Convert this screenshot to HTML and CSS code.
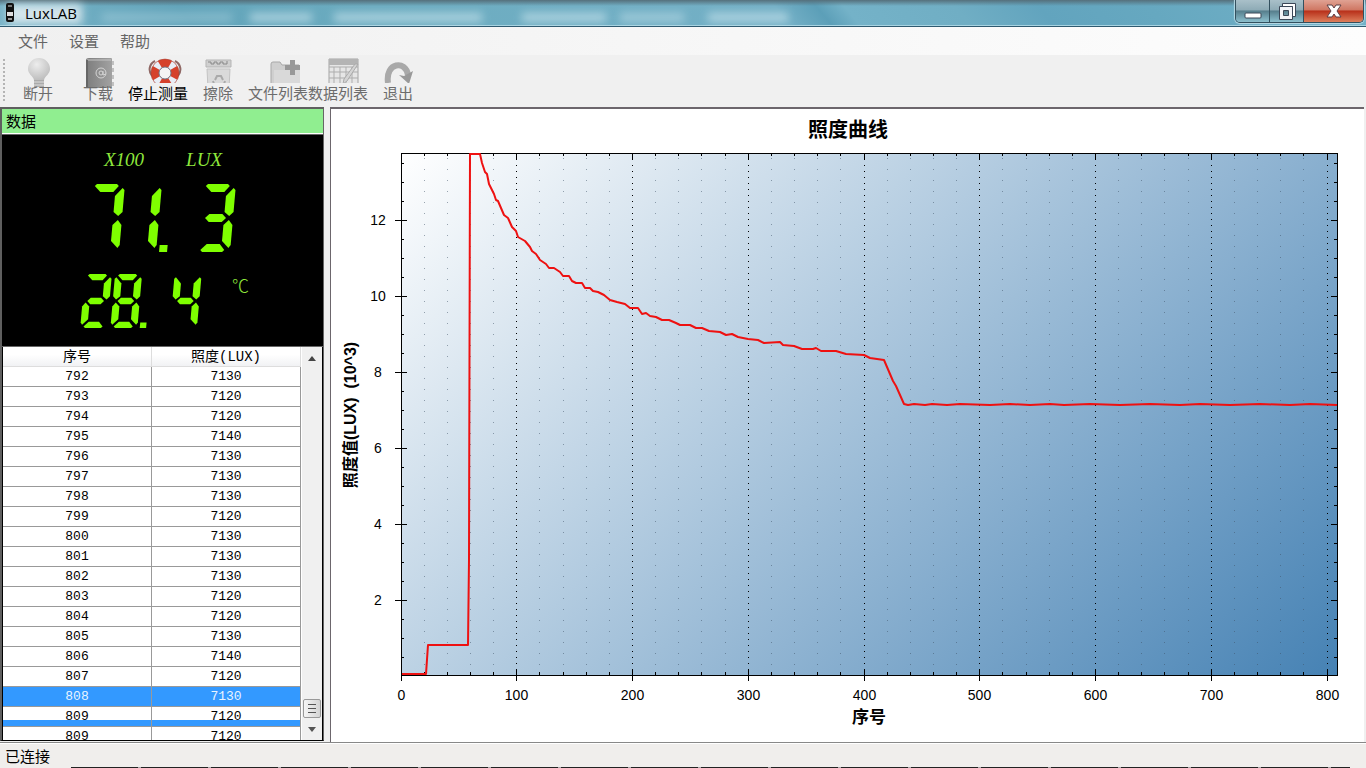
FILE: index.html
```html
<!DOCTYPE html>
<html lang="zh-CN">
<head>
<meta charset="utf-8">
<title>LuxLAB</title>
<link rel="stylesheet" href="styles.css">
</head>
<body>
<header class="titlebar">
  <div class="glass" aria-hidden="true"><i class="w1"></i><i class="w2"></i><i class="w3"></i><i class="w4"></i><i class="w5"></i><i class="w6"></i><i class="w7"></i></div>
  <svg class="app-icon" viewBox="0 0 10 20" aria-hidden="true">
    <rect x="1" y="0" width="8" height="19" rx="2" fill="#111"/>
    <rect x="3" y="2" width="4" height="2" fill="#777"/>
    <rect x="2" y="9" width="6" height="4" fill="#ddd"/>
    <rect x="3" y="15" width="4" height="2" fill="#999"/>
  </svg>
  <h1>LuxLAB</h1>
  <div class="window-buttons">
    <button class="win min" aria-label="最小化"><svg viewBox="0 0 18 18"><rect x="1" y="11" width="16" height="5" rx="1" fill="#fff" stroke="#3b4757"/></svg></button>
    <button class="win max" aria-label="还原"><svg viewBox="0 0 18 18"><path d="M4.500 1.500h13v13h-3v-10h-10z" fill="#fff" stroke="#3b4757"/><path fill-rule="evenodd" d="M1.500 4.500h13v13h-13zM5.500 8.500h5v5h-5z" fill="#f2f4f8" stroke="#3b4757"/></svg></button>
    <button class="win close" aria-label="关闭"><svg viewBox="0 0 18 18"><path d="M2 3h5l2 3 2-3h5l-4 6 4 6h-5l-2-3-2 3H2l4-6z" fill="#fff" stroke="#5b4047"/></svg></button>
  </div>
</header>

<nav class="menubar">
  <button>文件</button><button>设置</button><button>帮助</button>
</nav>

<div class="toolbar" role="toolbar">
  <button class="tool tall" disabled>
    <svg viewBox="0 0 32 30"><defs><radialGradient id="bulb" cx=".4" cy=".3" r=".8"><stop offset="0" stop-color="#ededed"/><stop offset="1" stop-color="#b8b8b8"/></radialGradient></defs><path d="M17 0a11 11 0 0 0-11 11c0 5 5 7 6 11h10c1-4 6-6 6-11A11 11 0 0 0 17 0z" fill="url(#bulb)"/><path d="M12 22h10v7H12z" fill="#aaa"/><path d="M12 24h10M12 27h10" stroke="#ddd"/></svg>
    <span>断开</span></button>
  <button class="tool tall" disabled>
    <svg viewBox="0 0 32 30"><defs><linearGradient id="book"><stop offset="0" stop-color="#7d7d7d"/><stop offset="1" stop-color="#a2a2a2"/></linearGradient></defs><path d="M4 2q0-2 3-2h22q1 0 1 1v29H4z" fill="url(#book)"/><path d="M5 2h24" stroke="#c4c4c4"/><path d="M5 2v28" stroke="#666" stroke-width="2"/><path d="M30 3h2v4h-2zm0 7h2v4h-2zm0 7h2v4h-2zm0 7h2v4h-2z" fill="#c0c0c0"/><circle cx="19" cy="15" r="5" fill="none" stroke="#d4d4d4"/><circle cx="19" cy="15" r="2" fill="none" stroke="#d4d4d4"/><path d="M21 13v4l3-1" fill="none" stroke="#d4d4d4"/></svg>
    <span>下载</span></button>
  <button class="tool active">
    <svg viewBox="0 0 32 30"><g transform="translate(7)"><path d="M6 3C0 6-1 13 3 18M26 3c6 3 7 10 3 15" fill="none" stroke="#8f6764" stroke-width="2"/><circle cx="16" cy="15" r="10" fill="none" stroke="#d5412b" stroke-width="8"/><circle cx="16" cy="15" r="10" fill="none" stroke="#e8eef6" stroke-width="8" stroke-dasharray="5 10.700" stroke-dashoffset="-5"/><circle cx="16" cy="15" r="14" fill="none" stroke="#a23c30" stroke-opacity=".5"/><circle cx="16" cy="15" r="6" fill="#f4f4f4" stroke="#6f7280"/></g></svg>
    <span>停止测量</span></button>
  <button class="tool" disabled>
    <svg viewBox="0 0 32 30"><path d="M4 2h25v7H4z" fill="#d0d0d0" stroke="#b5b5b5"/><path d="M6 4h3v2h3V4h3v2h3V4h3v2h4V3" fill="none" stroke="#888"/><path d="M5 11h23l-1 20H6z" fill="#dadada" stroke="#c3c3c3"/><path d="M13 22l2-4h4l2 4M12 26l-1-3M22 26l1-3" fill="none" stroke="#aaa" stroke-width="2"/></svg>
    <span>擦除</span></button>
  <button class="tool" disabled>
    <svg viewBox="0 0 32 30"><path d="M9 30V6q0-2 2-2h7l2 3h17v23z" fill="#cfcfcf" stroke="#a9a9a9"/><path d="M12 12h26v18H12z" fill="#d9d9d9"/><path d="M28 2h5v5h5v5h-5v5h-5v-5h-5V7h5z" fill="#989898"/></svg>
    <span>文件列表</span></button>
  <button class="tool" disabled>
    <svg viewBox="0 0 32 30"><path d="M7 1h29v29H7z" fill="#e6e6e6" stroke="#a4a4a4"/><path d="M7 1h29v6H7z" fill="#b4b4b4"/><path d="M7 9h29M7 14h29M7 20h29M12 9v21M18 9v21M24 9v21M30 9v21" stroke="#adadad"/><path d="M36 6L25 23l-4 3 1-5L33 6z" fill="#d4d4d4" stroke="#aaa"/></svg>
    <span>数据列表</span></button>
  <button class="tool" disabled>
    <svg viewBox="0 0 32 30"><path d="M6 25C3 4 24 2 26 17" fill="none" stroke="#a9a9a9" stroke-width="6"/><path d="M17 17l5 1 9-5-4 13z" fill="#999"/></svg>
    <span>退出</span></button>
</div>

<main class="workspace">
  <section class="side">
    <h2>数据</h2>
    <div class="display">
      <svg class="defs" aria-hidden="true"><defs>
        <path id="sa" d="M2 0H22L24 2L19 8H6L0 2z"/>
        <path id="sb" d="M28 4L30 6V28L26 32L21 28V12z"/>
        <path id="sc" d="M26 36L30 41V61L28 64L21 57V41z"/>
        <path id="sd" d="M2 68L0 66L6 60H19L24 66L22 68z"/>
        <path id="se" d="M0 36L-4 41V61L-2 64L5 57V41z"/>
        <path id="sf" d="M-2 4L-4 6V28L0 32L5 28V12z"/>
        <path id="sg" d="M2 34L6 30H19L23 34L19 38H6z"/>
        <path id="dp" d="M33 61h8v7h-8z"/>
      </defs></svg>
      <div class="units"><span>X100</span><span>LUX</span></div>
      <svg class="lux" viewBox="-4 0 154 68" role="img" aria-label="71.3"><g transform="translate(7) skewX(-5)">
        <g><use href="#sa"/><use href="#sb"/><use href="#sc"/></g>
        <g transform="translate(37)"><use href="#sb"/><use href="#sc"/><use href="#dp"/></g>
        <g transform="translate(111)"><use href="#sa"/><use href="#sb"/><use href="#sg"/><use href="#sc"/><use href="#sd"/></g>
      </g></svg>
      <div class="temp">
        <svg viewBox="-4 0 154 68" role="img" aria-label="28.4"><g transform="translate(7) skewX(-5)">
          <g><use href="#sa"/><use href="#sb"/><use href="#sg"/><use href="#se"/><use href="#sd"/></g>
          <g transform="translate(38)"><use href="#sa"/><use href="#sb"/><use href="#sc"/><use href="#sd"/><use href="#se"/><use href="#sf"/><use href="#sg"/><use href="#dp"/></g>
          <g transform="translate(113)"><use href="#sf"/><use href="#sb"/><use href="#sg"/><use href="#sc"/></g>
        </g></svg>
        <span>℃</span>
      </div>
    </div>
    <div class="grid">
      <div class="rows">
        <table>
          <thead><tr><th>序号</th><th>照度(LUX)</th></tr></thead>
          <tbody>
            <tr><td>792</td><td>7130</td></tr>
            <tr><td>793</td><td>7120</td></tr>
            <tr><td>794</td><td>7120</td></tr>
            <tr><td>795</td><td>7140</td></tr>
            <tr><td>796</td><td>7130</td></tr>
            <tr><td>797</td><td>7130</td></tr>
            <tr><td>798</td><td>7130</td></tr>
            <tr><td>799</td><td>7120</td></tr>
            <tr><td>800</td><td>7130</td></tr>
            <tr><td>801</td><td>7130</td></tr>
            <tr><td>802</td><td>7130</td></tr>
            <tr><td>803</td><td>7120</td></tr>
            <tr><td>804</td><td>7120</td></tr>
            <tr><td>805</td><td>7130</td></tr>
            <tr><td>806</td><td>7140</td></tr>
            <tr><td>807</td><td>7120</td></tr>
            <tr class="selected"><td>808</td><td>7130</td></tr>
            <tr class="partial"><td>809</td><td>7120</td></tr>
            <tr><td>809</td><td>7120</td></tr>
          </tbody>
        </table>
      </div>
      <div class="scroll">
        <button aria-label="向上"><svg viewBox="0 0 8 5"><path d="M0 5l4-5 4 5z" fill="#444"/></svg></button>
        <div class="thumb"></div>
        <button aria-label="向下"><svg viewBox="0 0 8 5"><path d="M0 0h8L4 5z" fill="#555"/></svg></button>
      </div>
    </div>
  </section>

  <section class="chart-panel">
    <svg class="chart" viewBox="331 109 1033 633" role="img" aria-label="照度曲线">
      <defs><linearGradient id="bg" gradientUnits="userSpaceOnUse" x1="401" y1="153" x2="1130" y2="882"><stop offset="0" stop-color="#fff"/><stop offset="1" stop-color="#4682b4"/></linearGradient></defs>
      <rect x="401" y="153" width="937" height="523" fill="url(#bg)"/>
      <g id="axes" shape-rendering="crispEdges"></g>
      <rect x="401.500" y="153.500" width="936" height="522" fill="none" stroke="#000" shape-rendering="crispEdges"/>
      <polyline class="curve" points="402,674 426,674 428,645 468,645 469,560 470,154 480,154 482,163 485,172 487,174 489,184 494,194 496,200 498,201 501,208 504,215 508,218 512,227 516,231 518,237 525,241 530,247 532,251 536,254 540,260 546,264 549,268 554,268 560,272 563,276 569,276 572,281 576,283 582,283 585,288 590,288 593,291 598,292 604,295 610,300 617,302 625,304 630,308 638,308 642,314 646,313 650,316 656,317 662,320 669,320 676,323 680,325 690,325 696,328 702,328 709,331 720,332 726,335 732,334 738,337 748,339 758,340 764,343 780,342 783,345 794,346 802,349 813,349 816,348 821,351 836,351 846,354 864,355 870,358 884,360 893,381 896,386 904,404 908,405 914,404 925,405 932,404 947,405 960,404 990,405 1010,404 1030,405 1050,404 1064,405 1090,404 1120,405 1150,404 1180,405 1200,404 1230,405 1260,404 1290,405 1310,404 1337,405"/>
      <text class="chart-title" x="848" y="137">照度曲线</text>
      <text class="axis-title" x="869" y="723">序号</text>
      <text class="axis-title y" transform="translate(356 415) rotate(-90)">照度值(LUX)&#160; (10^3)</text>
    </svg>
  </section>
</main>

<footer class="status">已连接</footer>
<script src="chart.js"></script>
</body>
</html>
```
FILE: styles.css
```css
* { box-sizing: border-box; }
body {
  margin: 0;
  height: 100vh;
  display: flex;
  flex-direction: column;
  overflow: hidden;
  background: #f0f0f0;
  color: #000;
  font: 15px/20px "Noto Sans CJK SC", sans-serif;
}
button { font: inherit; color: inherit; border: 0; padding: 0; margin: 0; background: none; }
svg { display: block; }

.titlebar {
  position: relative;
  display: flex;
  align-items: center;
  flex: none;
  height: 27px;
  padding-left: 5px;
  border-bottom: 1px solid #2f5a70;
  box-shadow: inset 0 -1px #a8d4e2;
  background:
    linear-gradient(#55707c 0, #6a98a800 6px),
    linear-gradient(50deg, #7ab4c8 0, #62a4ba 14%, #6cacc0 28%, #74b0c6 57%, #5c9fb8 60%, #74b2c8 62%, #70aec4 70%, #62a4be 76%, #66a8c0 84%, #74b2c8);
}
.glass { position: absolute; inset: 0; overflow: hidden; }
.glass i { position: absolute; top: 13px; height: 9px; filter: blur(4px); background: #d2eaf2; opacity: .6; }
.glass .w1 { left: 8px; width: 74px; top: 4px; height: 20px; opacity: .85; background: #e4eef2; }
.glass .w2 { left: 102px; width: 130px; opacity: .3; }
.glass .w3 { left: 250px; width: 62px; }
.glass .w4 { left: 334px; width: 148px; }
.glass .w5 { left: 522px; width: 84px; }
.glass .w6 { left: 620px; width: 64px; opacity: .45; }
.glass .w7 { left: 708px; width: 80px; }
.app-icon { position: relative; width: 10px; height: 20px; }
.titlebar h1 {
  position: relative;
  flex: 1;
  margin: 0 0 0 10px;
  font: 15px/20px "Open Sans", sans-serif;
}
.window-buttons {
  position: relative;
  align-self: flex-start;
  display: flex;
  height: 23px;
  margin-right: 2px;
  border: 1px solid #33505e;
  border-top: 0;
  border-radius: 0 0 5px 5px;
  overflow: hidden;
  box-shadow: 0 0 1px 1px #b8dbe6;
}
.win { width: 34px; display: grid; place-items: center; border-right: 1px solid #33505e; background: linear-gradient(#a9c0c9, #8eabb6 45%, #567e8c 50%, #8cc0ce); }
.win svg { width: 18px; height: 18px; }
.win.close { width: 59px; border: 0; background: linear-gradient(#e0a293, #cf7763 45%, #b8301a 50%, #dd7f5c); }

.menubar {
  flex: none;
  display: flex;
  gap: 21px;
  height: 28px;
  padding-left: 18px;
  color: #666;
  background: linear-gradient(90deg, #f0f0f0, #fdfdfd);
}

.toolbar { position: relative; flex: none; display: flex; height: 52px; padding: 3px 0 0 8px; background: #f0f0f0; }
.toolbar::before { content: ""; position: absolute; left: 3px; top: 4px; bottom: 6px; border-left: 2px dotted #b4b4b4; }
.tool { width: 60px; display: flex; flex-direction: column; align-items: center; color: #6c6c6c; white-space: nowrap; }
.tool svg { flex: none; width: 32px; height: 30px; margin-bottom: -5px; overflow: visible; clip-path: inset(0 -8px 5px -2px); }
.tool.tall svg { clip-path: none; }
.tool.active { color: #000; }

.workspace { flex: 1; min-height: 0; display: flex; gap: 6px; padding-right: 2px; }
.side {
  width: 324px;
  flex: none;
  display: flex;
  flex-direction: column;
  margin-bottom: 1px;
  border: 2px solid #5f5f5f;
  border-right: 1px solid #666;
  border-bottom: 1px solid #000;
}
.side h2 { flex: none; margin: 0; height: 25px; padding: 2px 4px; font-size: 15px; font-weight: 400; background: #90ee90; border-bottom: 1px solid #fff; }
.display { flex: none; height: 213px; padding: 14px 0 0 77px; background: #000; color: #7fff00; fill: #7fff00; border-top: 1px solid #666; border-bottom: 1px solid #666; }
.defs { position: absolute; width: 0; height: 0; }
.units { display: flex; gap: 42px; padding-left: 25px; font: italic 19px/22px "Liberation Serif", serif; color: #8fe83c; }
.lux { width: 154px; height: 68px; margin: 13px 0 0 5px; }
.temp { display: flex; gap: 30px; margin-top: 22px; }
.temp svg { width: 123px; height: 54px; }
.temp span { font: 300 17px/22px "Noto Sans CJK SC", serif; color: #8fe83c; }

.grid { flex: 1; min-height: 0; display: flex; border-left: 1px solid #000; border-right: 1px solid #000; background: #fff; }
.rows { flex: 1; overflow: hidden; }
table { width: 298px; border-collapse: separate; border-spacing: 0; table-layout: fixed; font: 13px/18px "Liberation Mono", "Noto Sans CJK SC", monospace; text-align: center; }
th, td { height: 20px; padding: 1px 0 0; line-height: 18px; border-right: 1px solid #999; border-bottom: 1px solid #999; }
th { font-size: 14px; font-weight: 400; border-color: #ddd; background: linear-gradient(#fff 40%, #f1f2f4); }
.selected td { background: #3399ff; color: #e8f4ff; }
.partial td { background: linear-gradient(#fff 13px, #3399ff 13px); }
.scroll { width: 20px; display: flex; flex-direction: column; align-items: center; background: #f0f0f0; }
.scroll button { width: 18px; height: 22px; display: grid; place-items: center; }
.scroll button svg { width: 8px; height: 5px; }
.thumb {
  width: 18px;
  height: 19px;
  margin-top: auto;
  border: 1px solid #999;
  border-radius: 2px;
  background: linear-gradient(#555, #555) center 4px / 8px 1px no-repeat, linear-gradient(#555, #555) center 8px / 8px 1px no-repeat, linear-gradient(#555, #555) center 12px / 8px 1px no-repeat, linear-gradient(90deg, #f5f5f5, #d4d4d4);
}

.chart-panel { flex: 1; min-width: 0; border-top: 2px solid #6c666c; border-left: 1px solid #6c666c; background: #fff; }
.chart { width: 100%; height: 100%; font-family: "Liberation Sans", "Noto Sans CJK SC", sans-serif; }
.curve { fill: none; stroke: #ee1111; stroke-width: 2; stroke-linejoin: round; }
.chart text { text-anchor: middle; }
.chart-title { font-size: 20px; font-weight: 700; }
.axis-title { font-size: 17px; font-weight: 700; }
.axis-title.y { font-size: 16px; }
.label { font-size: 14px; }
.tick { stroke: #000; }
.major { stroke: #000; stroke-dasharray: 1 5; }
.minor { stroke: #3c5064; stroke-opacity: .5; stroke-dasharray: 1 10; }

.status {
  position: relative;
  flex: none;
  height: 26px;
  padding: 3px 5px;
  border-top: 1px solid #888;
  background: linear-gradient(#fff 1px, #f0eeec 1px);
}
.status::after {
  content: "";
  position: absolute;
  left: 71px;
  right: 16px;
  bottom: 0;
  height: 1px;
  background: repeating-linear-gradient(90deg, #222 0 67px, #aaa 67px 70px);
}
```
FILE: chart.js
```javascript
const axes = document.getElementById("axes");
const LEFT = 401, RIGHT = 1337, TOP = 153, BOTTOM = 675;

function line(cls, x1, y1, x2, y2) {
  const el = document.createElementNS("http://www.w3.org/2000/svg", "line");
  el.setAttribute("class", cls);
  [["x1", x1], ["y1", y1], ["x2", x2], ["y2", y2]].forEach(([k, v]) => el.setAttribute(k, v));
  axes.appendChild(el);
}

function label(x, y, value) {
  const el = document.createElementNS("http://www.w3.org/2000/svg", "text");
  el.setAttribute("class", "label");
  el.setAttribute("x", x);
  el.setAttribute("y", y);
  el.textContent = value;
  axes.appendChild(el);
}

for (let v = 0; v <= 800; v += 20) {
  const x = Math.floor(LEFT + v * 1.1575) + 0.5;
  const major = v % 100 === 0;
  const len = major ? 6 : 3;
  if (v > 0) line(major ? "major" : "minor", x, TOP + (major ? 6 : 5), x, BOTTOM);
  line("tick", x, TOP, x, TOP + len);
  line("tick", x, BOTTOM - len, x, BOTTOM + (major ? 6 : 0));
  if (major) label(x, 700, v);
}

for (let v = 0.5; v <= 13.5; v += 0.5) {
  const y = Math.round(676 - v * 38) + 0.5;
  const major = v % 2 === 0;
  const len = major ? 6 : 3;
  line("tick", LEFT - (major ? 6 : 0), y, LEFT + len, y);
  line("tick", RIGHT - len, y, RIGHT, y);
  if (major) label(378, y + 4, v);
}
```
